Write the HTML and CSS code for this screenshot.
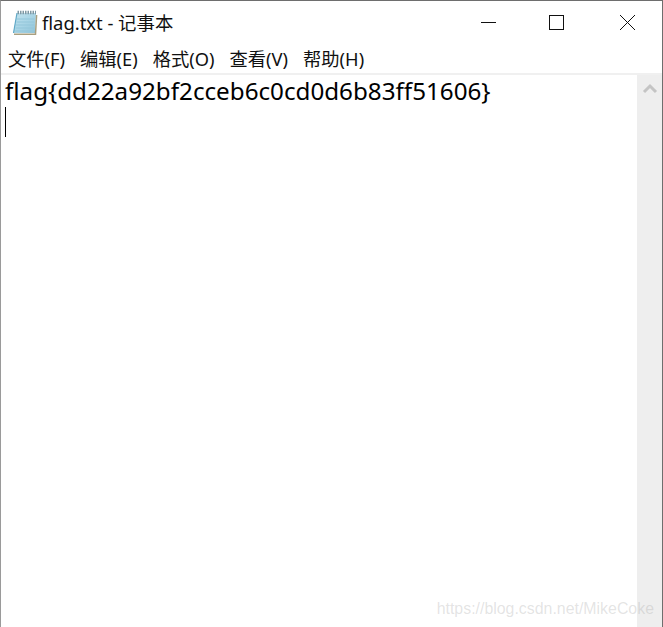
FILE: index.html
```html
<!DOCTYPE html>
<html lang="zh">
<head>
<meta charset="utf-8">
<title>flag.txt - 记事本</title>
<link rel="stylesheet" href="styles.css">
</head>
<body>
<div class="window">
  <header class="titlebar">
    <div class="title-left">
      <svg class="app-icon" width="26" height="26" viewBox="0 0 26 26">
        <defs>
          <linearGradient id="page" x1="0" y1="0" x2="1" y2="1">
            <stop offset="0" stop-color="#c4e4ef"/>
            <stop offset="0.5" stop-color="#a9d5e6"/>
            <stop offset="1" stop-color="#8fc3d8"/>
          </linearGradient>
        </defs>
        <path d="M5 3 H24 L23 23 H1.5 Z" fill="url(#page)"/>
        <path d="M5 3 L1.5 23" stroke="#5fa8c6" stroke-width="1.2" fill="none"/>
        <path d="M2 24.2 H23.5 L24.6 5" stroke="#a89f80" stroke-width="1.5" fill="none"/>
        <path d="M5 9 H22.5 M4.5 12 H22.3 M4 15 H22.1 M3.6 18 H22 M3.2 21 H21.8" stroke="#93c6da" stroke-width="1"/>
        <path d="M5.5 2.5 H24" stroke="#7f98a4" stroke-width="3.5" stroke-dasharray="1.5 1"/>
      </svg>
      <span class="title-text">flag.txt - 记事本</span>
    </div>
    <div class="controls">
      <svg class="ctl" width="70" height="43" viewBox="0 0 70 43"><path d="M29 21.5 H44" stroke="#111" stroke-width="1"/></svg>
      <svg class="ctl" width="70" height="43" viewBox="0 0 70 43"><rect x="27.5" y="14.5" width="14" height="14" fill="none" stroke="#111" stroke-width="1"/></svg>
      <svg class="ctl" width="70" height="43" viewBox="0 0 70 43"><path d="M28 14 L43 29 M43 14 L28 29" stroke="#111" stroke-width="1" fill="none"/></svg>
    </div>
  </header>
  <nav class="menu">
    <span>文件(F)</span><span>编辑(E)</span><span>格式(O)</span><span>查看(V)</span><span>帮助(H)</span>
  </nav>
  <main class="content">
    <div class="editor">
      <div class="line">flag{dd22a92bf2cceb6c0cd0d6b83ff51606}</div>
      <div class="caret"></div>
    </div>
    <aside class="scrollbar">
      <svg width="25" height="25" viewBox="0 0 25 25"><path d="M7 17 L13 11 L19 17" stroke="#c4c4c4" stroke-width="3" fill="none"/></svg>
    </aside>
  </main>
  <div class="watermark">https://blog.csdn.net/MikeCoke</div>
</div>
</body>
</html>
```
FILE: styles.css
```css
* { box-sizing: border-box; }
html, body { margin: 0; height: 100%; background: #fff; overflow: hidden; }
.window {
  position: relative;
  width: 663px;
  height: 627px;
  display: flex;
  flex-direction: column;
  border-top: 1px solid #6e6e6e;
  border-left: 1px solid #9a9a9a;
  border-right: 1px solid #6e6e6e;
  font-family: "Noto Sans", "Noto Sans CJK SC", sans-serif;
  color: #000;
}
.titlebar {
  height: 43px;
  display: flex;
  justify-content: space-between;
  align-items: flex-start;
}
.title-left { display: flex; align-items: center; height: 43px; padding-left: 11px; }
.app-icon { margin-right: 4px; }
.title-text { font-size: 18.4px; color: #111; margin-bottom: 2px; }
.controls { display: flex; }
.ctl { display: block; }
.menu {
  height: 29px;
  display: flex;
  gap: 15px;
  padding-left: 7px;
  padding-bottom: 2px;
  align-items: center;
  font-size: 18.3px;
  color: #111;
}
.content {
  flex: 1;
  display: flex;
  border-top: 2px solid #f0f0f0;
  min-height: 0;
}
.editor { flex: 1; padding-left: 4px; }
.line { font-size: 24.2px; line-height: 32px; white-space: nowrap; }
.caret { width: 1px; height: 30px; background: #000; }
.scrollbar { width: 25px; background: #eeeeee; }
.scrollbar svg { display: block; }
.watermark {
  position: absolute;
  right: 8px;
  bottom: 9px;
  font-family: "Liberation Sans", sans-serif;
  font-size: 15.9px;
  color: rgba(170,170,170,0.32);
}
```
